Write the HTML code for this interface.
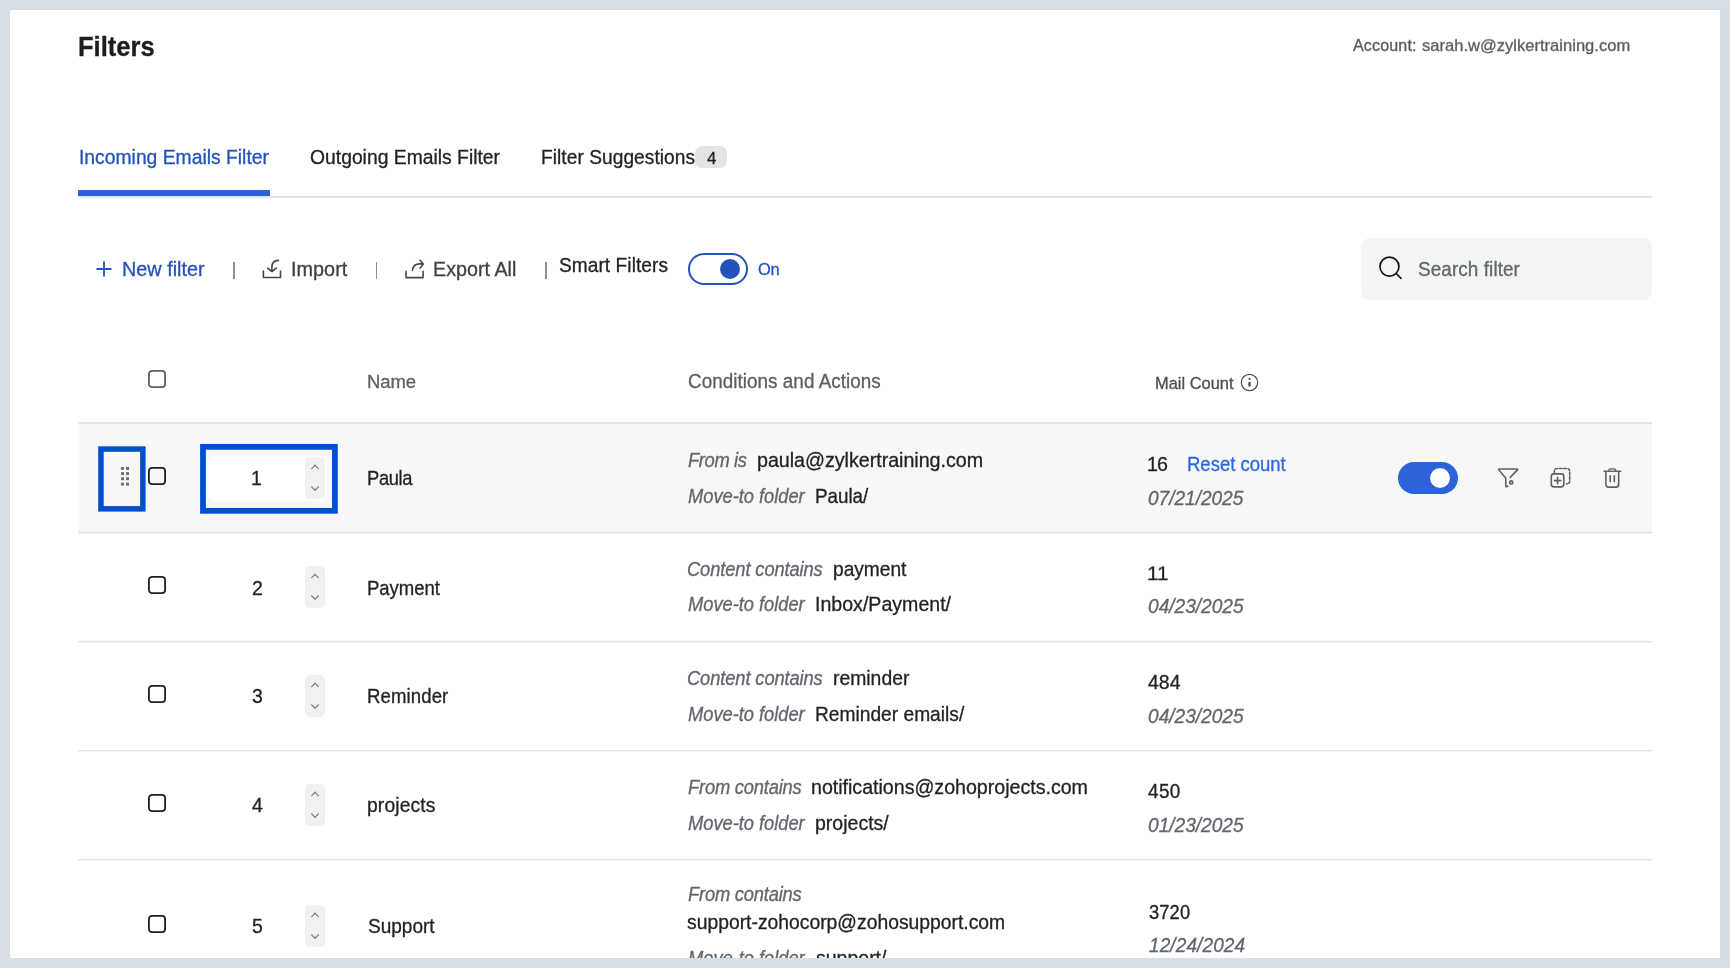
<!DOCTYPE html>
<html><head><meta charset="utf-8">
<style>
html,body{margin:0;padding:0;}
body{width:1730px;height:968px;overflow:hidden;background:#d8dee5;position:relative;font-family:"Liberation Sans", sans-serif;}
.t{position:absolute;white-space:nowrap;line-height:normal;will-change:transform;-webkit-text-stroke:0.3px currentColor;}
.mk{display:inline-block;width:0;height:0;}
svg{position:absolute;overflow:visible;}
</style></head><body>
<div style="position:absolute;left:10px;top:10px;width:1710px;height:948px;background:#fff;box-shadow:0 0 0 1px #d3dce2;"></div>
<div style="position:absolute;left:695px;top:146px;width:32px;height:22px;background:#e3e4e6;border-radius:7px;"></div>
<div style="position:absolute;left:78px;top:196px;width:1574px;height:2px;background:#e3e4e6;"></div>
<div style="position:absolute;left:78px;top:190px;width:192px;height:6px;background:#2c63d9;"></div>
<svg style="left:96px;top:261px" width="16" height="16" viewBox="0 0 16 16"><path d="M8 0.5V15.5M0.5 8H15.5" stroke="#2552b8" stroke-width="1.8" fill="none"/></svg>
<div style="position:absolute;left:233px;top:262px;width:1.6px;height:17px;background:#8e8e8e;"></div>
<div style="position:absolute;left:375.5px;top:262px;width:1.6px;height:17px;background:#8e8e8e;"></div>
<div style="position:absolute;left:545px;top:262px;width:1.6px;height:17px;background:#8e8e8e;"></div>
<svg style="left:258px;top:254px" width="30" height="30" viewBox="0 0 30 30"><path d="M5.4 17V23.5H22.5V17M20.5 6.4C16.5 6.6 13.9 9 13.9 13V17.2M9.6 14.2L13.9 17.5L18.3 14.2" stroke="#43474e" stroke-width="1.6" fill="none" stroke-linecap="round" stroke-linejoin="round"/></svg>
<svg style="left:400px;top:254px" width="30" height="30" viewBox="0 0 30 30"><path d="M6 17.2V23.6H23.1V17.2M12.4 16.4C12.8 12 16 9.9 20 9.9H23M20.1 6.2L23.3 9.9L20.1 14.2" stroke="#43474e" stroke-width="1.6" fill="none" stroke-linecap="round" stroke-linejoin="round"/></svg>
<div style="position:absolute;left:688px;top:253px;width:60px;height:32px;box-sizing:border-box;border:2px solid #2552b8;border-radius:16px;"></div>
<div style="position:absolute;left:719.5px;top:259px;width:20px;height:20px;background:#2552b8;border-radius:50%;"></div>
<div style="position:absolute;left:1361px;top:238px;width:291px;height:62px;background:#f3f4f4;border-radius:9px;"></div>
<svg style="left:1374px;top:252px" width="34" height="34" viewBox="0 0 34 34"><circle cx="15.45" cy="14.6" r="9.5" stroke="#141518" stroke-width="1.7" fill="none"/><path d="M22.3 21.5L27 26.3" stroke="#141518" stroke-width="1.7" stroke-linecap="round"/></svg>
<svg style="left:148px;top:370px" width="18" height="18" viewBox="0 0 18 18"><rect x="0.9" y="0.9" width="16.2" height="16.2" rx="3.2" stroke="#5b5f66" stroke-width="1.8" fill="none"/></svg>
<svg style="left:1240px;top:373px" width="19" height="19" viewBox="0 0 19 19"><circle cx="9.5" cy="9.5" r="8.2" stroke="#4a4e55" stroke-width="1.2" fill="none"/><circle cx="9.5" cy="5.9" r="1.05" fill="#4a4e55"/><path d="M9.5 10V12.5" stroke="#4a4e55" stroke-width="2.4" stroke-linecap="round"/></svg>
<div style="position:absolute;left:78px;top:422px;width:1574px;height:2px;background:#e3e4e6;"></div>
<div style="position:absolute;left:78px;top:424px;width:1574px;height:108px;background:#f7f7f7;"></div>
<svg style="left:0;top:0" width="1730" height="968"><rect x="78" y="531.9" width="1574" height="1.5" fill="#e2e3e5"/><rect x="78" y="640.9" width="1574" height="1.5" fill="#e2e3e5"/><rect x="78" y="749.9" width="1574" height="1.5" fill="#e2e3e5"/><rect x="78" y="858.9" width="1574" height="1.5" fill="#e2e3e5"/></svg>
<svg style="left:148px;top:576px" width="18" height="18" viewBox="0 0 18 18"><rect x="0.9" y="0.9" width="16.2" height="16.2" rx="3.2" stroke="#1d1f23" stroke-width="1.8" fill="none"/></svg>
<div style="position:absolute;left:305px;top:566px;width:20px;height:42px;background:#f0f1f2;border-radius:5px;"></div>
<svg style="left:305px;top:566px" width="20" height="42" viewBox="0 0 20 42"><path d="M6.3 12.1L10 8.3L13.7 12.1M6.3 29.5L10 33.3L13.7 29.5" stroke="#82868d" stroke-width="1.3" fill="none"/></svg>
<svg style="left:148px;top:685px" width="18" height="18" viewBox="0 0 18 18"><rect x="0.9" y="0.9" width="16.2" height="16.2" rx="3.2" stroke="#1d1f23" stroke-width="1.8" fill="none"/></svg>
<div style="position:absolute;left:305px;top:675px;width:20px;height:42px;background:#f0f1f2;border-radius:5px;"></div>
<svg style="left:305px;top:675px" width="20" height="42" viewBox="0 0 20 42"><path d="M6.3 12.1L10 8.3L13.7 12.1M6.3 29.5L10 33.3L13.7 29.5" stroke="#82868d" stroke-width="1.3" fill="none"/></svg>
<svg style="left:148px;top:794px" width="18" height="18" viewBox="0 0 18 18"><rect x="0.9" y="0.9" width="16.2" height="16.2" rx="3.2" stroke="#1d1f23" stroke-width="1.8" fill="none"/></svg>
<div style="position:absolute;left:305px;top:784px;width:20px;height:42px;background:#f0f1f2;border-radius:5px;"></div>
<svg style="left:305px;top:784px" width="20" height="42" viewBox="0 0 20 42"><path d="M6.3 12.1L10 8.3L13.7 12.1M6.3 29.5L10 33.3L13.7 29.5" stroke="#82868d" stroke-width="1.3" fill="none"/></svg>
<svg style="left:148px;top:915px" width="18" height="18" viewBox="0 0 18 18"><rect x="0.9" y="0.9" width="16.2" height="16.2" rx="3.2" stroke="#1d1f23" stroke-width="1.8" fill="none"/></svg>
<div style="position:absolute;left:305px;top:905px;width:20px;height:42px;background:#f0f1f2;border-radius:5px;"></div>
<svg style="left:305px;top:905px" width="20" height="42" viewBox="0 0 20 42"><path d="M6.3 12.1L10 8.3L13.7 12.1M6.3 29.5L10 33.3L13.7 29.5" stroke="#82868d" stroke-width="1.3" fill="none"/></svg>
<svg style="left:148px;top:467px" width="18" height="18" viewBox="0 0 18 18"><rect x="0.9" y="0.9" width="16.2" height="16.2" rx="3.2" stroke="#1d1f23" stroke-width="1.8" fill="none"/></svg>
<svg style="left:0;top:0" width="1730" height="968"><rect x="100.95" y="449.05" width="41.9" height="59.8" stroke="#0050ce" stroke-width="5.5" fill="none"/><rect x="202.97" y="446.87" width="131.95" height="63.95" stroke="#0050ce" stroke-width="5.75" fill="none"/></svg>
<svg style="left:121px;top:467px" width="8" height="19" viewBox="0 0 8 19"><rect x="0" y="0" width="3" height="3" fill="#6f7378"/><rect x="0" y="5.1" width="3" height="3" fill="#6f7378"/><rect x="0" y="10.2" width="3" height="3" fill="#6f7378"/><rect x="0" y="15.6" width="3" height="3" fill="#6f7378"/><rect x="5" y="0" width="3" height="3" fill="#6f7378"/><rect x="5" y="5.1" width="3" height="3" fill="#6f7378"/><rect x="5" y="10.2" width="3" height="3" fill="#6f7378"/><rect x="5" y="15.6" width="3" height="3" fill="#6f7378"/></svg>
<div style="position:absolute;left:207px;top:454.5px;width:120px;height:46.5px;background:#fff;border-radius:9px;"></div>
<div style="position:absolute;left:305px;top:457px;width:20px;height:42px;background:#f0f1f2;border-radius:5px;"></div>
<svg style="left:305px;top:457px" width="20" height="42" viewBox="0 0 20 42"><path d="M6.3 12.1L10 8.3L13.7 12.1M6.3 29.5L10 33.3L13.7 29.5" stroke="#82868d" stroke-width="1.3" fill="none"/></svg>
<div style="position:absolute;left:1398px;top:462px;width:60px;height:32px;background:#2c63d9;border-radius:16px;"></div>
<div style="position:absolute;left:1430px;top:468px;width:20px;height:20px;background:#fff;border-radius:50%;"></div>
<svg style="left:1490px;top:460px" width="140" height="35" viewBox="0 0 140 35"><g stroke="#5d6168" stroke-width="1.6" fill="none" stroke-linecap="round" stroke-linejoin="round"><path d="M20.2 17.4L27.4 9.9Q28.2 9 27 9H9.4Q8.2 9 9 9.9L15.8 18.2V26.2Q15.8 27.3 16.8 26.6L17.6 26"/><circle cx="21.2" cy="22.4" r="1.55" stroke-width="1.8"/><rect x="61.3" y="13.9" width="12.5" height="13" rx="2.6"/><path d="M64.4 20.6H70.8M67.6 17.4V23.8"/><path d="M64.3 13.4V11.6Q64.3 8.5 67.4 8.5H76.6Q79.7 8.5 79.7 11.6V20.8Q79.7 23.9 76.6 23.9" stroke-dasharray="2.6 1.7"/><path d="M114.1 11.3H130.7M115.9 11.3V24.5Q115.9 27.1 118.5 27.1H126.1Q128.7 27.1 128.7 24.5V11.3M120.2 15.8V21.6M124.3 15.8V21.6"/><path d="M118.7 11V10.6Q118.7 8.8 120.5 8.8H124Q125.8 8.8 125.8 10.6V11" stroke-width="1.3"/></g></svg>
<div class="t" style="transform:scaleY(1.105);transform-origin:0 23.00px;left:78.00px;top:33.00px;font-size:25.53px;color:#1b1d21;font-weight:bold;font-style:normal;letter-spacing:0.003px">Filters</div>
<div class="t" style="left:1353.00px;top:36.00px;font-size:16.07px;color:#555a62;font-weight:normal;font-style:normal;letter-spacing:0.137px">Account:</div>
<div class="t" style="transform:scaleY(0.979);transform-origin:0 15.20px;left:1421.80px;top:36.00px;font-size:16.55px;color:#555a62;font-weight:normal;font-style:normal;letter-spacing:0.012px">sarah.w@zylkertraining.com</div>
<div class="t" style="transform:scaleY(1.026);transform-origin:0 17.00px;left:78.50px;top:147.00px;font-size:19.32px;color:#2552b8;font-weight:normal;font-style:normal;letter-spacing:-0.001px">Incoming Emails Filter</div>
<div class="t" style="transform:scaleY(1.026);transform-origin:0 17.00px;left:310.40px;top:147.00px;font-size:19.32px;color:#1f2125;font-weight:normal;font-style:normal;letter-spacing:0.003px">Outgoing Emails Filter</div>
<div class="t" style="transform:scaleY(1.035);transform-origin:0 17.00px;left:541.30px;top:147.00px;font-size:19.15px;color:#1f2125;font-weight:normal;font-style:normal;letter-spacing:0.051px">Filter Suggestions</div>
<div class="t" style="transform:scaleY(1.027);transform-origin:0 14.80px;left:706.80px;top:148.50px;font-size:16.87px;color:#1f2125;font-weight:normal;font-style:normal;letter-spacing:0px">4</div>
<div class="t" style="left:122.00px;top:258.00px;font-size:19.8px;color:#2552b8;font-weight:normal;font-style:normal;letter-spacing:0.017px">New filter</div>
<div class="t" style="left:290.80px;top:258.00px;font-size:19.84px;color:#3d4148;font-weight:normal;font-style:normal;letter-spacing:0.023px">Import</div>
<div class="t" style="left:433.00px;top:258.00px;font-size:19.71px;color:#3d4148;font-weight:normal;font-style:normal;letter-spacing:0.014px">Export All</div>
<div class="t" style="transform:scaleY(1.039);transform-origin:0 17.00px;left:558.60px;top:255.00px;font-size:19.09px;color:#1f2125;font-weight:normal;font-style:normal;letter-spacing:0.069px">Smart Filters</div>
<div class="t" style="transform:scaleY(1.036);transform-origin:0 15.00px;left:758.00px;top:259.50px;font-size:16.45px;color:#2552b8;font-weight:normal;font-style:normal;letter-spacing:-0.286px">On</div>
<div class="t" style="transform:scaleY(1.031);transform-origin:0 17.00px;left:1418.40px;top:259.00px;font-size:18.94px;color:#62666d;font-weight:normal;font-style:normal;letter-spacing:0.072px">Search filter</div>
<div class="t" style="transform:scaleY(1.038);transform-origin:0 17.20px;left:367.00px;top:370.50px;font-size:18.43px;color:#5b5f66;font-weight:normal;font-style:normal;letter-spacing:-0.065px">Name</div>
<div class="t" style="transform:scaleY(1.050);transform-origin:0 17.00px;left:688.00px;top:371.00px;font-size:18.88px;color:#5b5f66;font-weight:normal;font-style:normal;letter-spacing:0.044px">Conditions and Actions</div>
<div class="t" style="transform:scaleY(1.019);transform-origin:0 15.00px;left:1155.00px;top:374.00px;font-size:16.44px;color:#4a4e55;font-weight:normal;font-style:normal;letter-spacing:-0.0px">Mail Count</div>
<div class="t" style="transform:scaleY(1.017);transform-origin:0 18.00px;left:251.40px;top:467.00px;font-size:19.5px;color:#1f2125;font-weight:normal;font-style:normal;letter-spacing:0px">1</div>
<div class="t" style="transform:scaleY(1.082);transform-origin:0 17.00px;left:366.70px;top:468.00px;font-size:18.33px;color:#1f2125;font-weight:normal;font-style:normal;letter-spacing:-0.346px">Paula</div>
<div class="t" style="transform:scaleY(1.082);transform-origin:0 17.00px;left:687.80px;top:450.00px;font-size:18.33px;color:#62666d;font-weight:normal;font-style:italic;letter-spacing:-0.354px">From is</div>
<div class="t" style="left:756.70px;top:449.00px;font-size:19.7px;color:#1f2125;font-weight:normal;font-style:normal;letter-spacing:-0.03px">paula@zylkertraining.com</div>
<div class="t" style="transform:scaleY(1.082);transform-origin:0 17.00px;left:687.80px;top:485.50px;font-size:18.33px;color:#62666d;font-weight:normal;font-style:italic;letter-spacing:-0.034px">Move-to folder</div>
<div class="t" style="transform:scaleY(1.053);transform-origin:0 17.00px;left:815.00px;top:485.50px;font-size:18.83px;color:#1f2125;font-weight:normal;font-style:normal;letter-spacing:-0.031px">Paula/</div>
<div class="t" style="left:1147.00px;top:452.50px;font-size:19.65px;color:#1f2125;font-weight:normal;font-style:normal;letter-spacing:-0.923px">16</div>
<div class="t" style="transform:scaleY(1.039);transform-origin:0 17.10px;left:1148.00px;top:487.50px;font-size:19.09px;color:#62666d;font-weight:normal;font-style:italic;letter-spacing:-0.019px">07/21/2025</div>
<div class="t" style="transform:scaleY(1.017);transform-origin:0 18.00px;left:252.40px;top:576.50px;font-size:19.5px;color:#1f2125;font-weight:normal;font-style:normal;letter-spacing:0px">2</div>
<div class="t" style="transform:scaleY(1.069);transform-origin:0 17.00px;left:366.70px;top:577.50px;font-size:18.55px;color:#1f2125;font-weight:normal;font-style:normal;letter-spacing:-0.03px">Payment</div>
<div class="t" style="transform:scaleY(1.082);transform-origin:0 16.80px;left:686.80px;top:558.50px;font-size:18.33px;color:#62666d;font-weight:normal;font-style:italic;letter-spacing:-0.119px">Content contains</div>
<div class="t" style="transform:scaleY(1.034);transform-origin:0 16.80px;left:832.50px;top:558.50px;font-size:19.17px;color:#1f2125;font-weight:normal;font-style:normal;letter-spacing:-0.008px">payment</div>
<div class="t" style="transform:scaleY(1.082);transform-origin:0 17.00px;left:687.80px;top:594.00px;font-size:18.33px;color:#62666d;font-weight:normal;font-style:italic;letter-spacing:-0.034px">Move-to folder</div>
<div class="t" style="transform:scaleY(1.013);transform-origin:0 18.00px;left:815.00px;top:593.00px;font-size:19.58px;color:#1f2125;font-weight:normal;font-style:normal;letter-spacing:0.0px">Inbox/Payment/</div>
<div class="t" style="transform:scaleY(0.959);transform-origin:0 19.00px;left:1147.00px;top:561.00px;font-size:20.67px;color:#1f2125;font-weight:normal;font-style:normal;letter-spacing:0.046px">11</div>
<div class="t" style="transform:scaleY(1.035);transform-origin:0 17.00px;left:1148.00px;top:596.00px;font-size:19.15px;color:#62666d;font-weight:normal;font-style:italic;letter-spacing:-0.017px">04/23/2025</div>
<div class="t" style="transform:scaleY(1.017);transform-origin:0 18.00px;left:252.40px;top:685.00px;font-size:19.5px;color:#1f2125;font-weight:normal;font-style:normal;letter-spacing:0px">3</div>
<div class="t" style="transform:scaleY(1.067);transform-origin:0 17.00px;left:366.70px;top:686.00px;font-size:18.59px;color:#1f2125;font-weight:normal;font-style:normal;letter-spacing:0.107px">Reminder</div>
<div class="t" style="transform:scaleY(1.082);transform-origin:0 17.10px;left:686.80px;top:667.50px;font-size:18.33px;color:#62666d;font-weight:normal;font-style:italic;letter-spacing:-0.119px">Content contains</div>
<div class="t" style="transform:scaleY(1.024);transform-origin:0 18.10px;left:832.50px;top:666.50px;font-size:19.36px;color:#1f2125;font-weight:normal;font-style:normal;letter-spacing:-0.006px">reminder</div>
<div class="t" style="transform:scaleY(1.082);transform-origin:0 17.20px;left:687.80px;top:703.50px;font-size:18.33px;color:#62666d;font-weight:normal;font-style:italic;letter-spacing:-0.034px">Move-to folder</div>
<div class="t" style="transform:scaleY(1.033);transform-origin:0 17.20px;left:815.00px;top:703.50px;font-size:19.19px;color:#1f2125;font-weight:normal;font-style:normal;letter-spacing:-0.004px">Reminder emails/</div>
<div class="t" style="transform:scaleY(1.017);transform-origin:0 18.00px;left:1148.00px;top:671.00px;font-size:19.5px;color:#1f2125;font-weight:normal;font-style:normal;letter-spacing:0px">484</div>
<div class="t" style="transform:scaleY(1.035);transform-origin:0 17.00px;left:1148.00px;top:706.00px;font-size:19.15px;color:#62666d;font-weight:normal;font-style:italic;letter-spacing:-0.017px">04/23/2025</div>
<div class="t" style="transform:scaleY(1.017);transform-origin:0 18.20px;left:252.40px;top:793.50px;font-size:19.5px;color:#1f2125;font-weight:normal;font-style:normal;letter-spacing:0px">4</div>
<div class="t" style="transform:scaleY(1.028);transform-origin:0 17.20px;left:366.70px;top:794.50px;font-size:19.29px;color:#1f2125;font-weight:normal;font-style:normal;letter-spacing:0.133px">projects</div>
<div class="t" style="transform:scaleY(1.082);transform-origin:0 17.00px;left:687.80px;top:776.50px;font-size:18.33px;color:#62666d;font-weight:normal;font-style:italic;letter-spacing:-0.196px">From contains</div>
<div class="t" style="left:811.30px;top:775.50px;font-size:19.66px;color:#1f2125;font-weight:normal;font-style:normal;letter-spacing:-0.028px">notifications@zohoprojects.com</div>
<div class="t" style="transform:scaleY(1.082);transform-origin:0 17.00px;left:687.80px;top:813.00px;font-size:18.33px;color:#62666d;font-weight:normal;font-style:italic;letter-spacing:-0.034px">Move-to folder</div>
<div class="t" style="transform:scaleY(1.016);transform-origin:0 18.00px;left:814.50px;top:812.00px;font-size:19.51px;color:#1f2125;font-weight:normal;font-style:normal;letter-spacing:0.003px">projects/</div>
<div class="t" style="transform:scaleY(1.045);transform-origin:0 17.20px;left:1148.00px;top:780.50px;font-size:18.97px;color:#1f2125;font-weight:normal;font-style:normal;letter-spacing:0.359px">450</div>
<div class="t" style="transform:scaleY(1.035);transform-origin:0 17.00px;left:1148.00px;top:815.00px;font-size:19.15px;color:#62666d;font-weight:normal;font-style:italic;letter-spacing:-0.017px">01/23/2025</div>
<div class="t" style="transform:scaleY(1.069);transform-origin:0 17.10px;left:1186.70px;top:453.50px;font-size:18.55px;color:#2f68de;font-weight:normal;font-style:normal;letter-spacing:-0.014px">Reset count</div>
<div class="t" style="transform:scaleY(1.017);transform-origin:0 18.00px;left:252.40px;top:915.00px;font-size:19.5px;color:#1f2125;font-weight:normal;font-style:normal;letter-spacing:0px">5</div>
<div class="t" style="transform:scaleY(1.041);transform-origin:0 17.00px;left:367.70px;top:916.00px;font-size:19.05px;color:#1f2125;font-weight:normal;font-style:normal;letter-spacing:-0.011px">Support</div>
<div class="t" style="transform:scaleY(1.082);transform-origin:0 17.00px;left:687.80px;top:884.00px;font-size:18.33px;color:#62666d;font-weight:normal;font-style:italic;letter-spacing:-0.196px">From contains</div>
<div class="t" style="transform:scaleY(1.026);transform-origin:0 17.20px;left:687.40px;top:911.50px;font-size:19.33px;color:#1f2125;font-weight:normal;font-style:normal;letter-spacing:-0.003px">support-zohocorp@zohosupport.com</div>
<div class="t" style="transform:scaleY(1.082);transform-origin:0 17.00px;left:687.80px;top:947.50px;font-size:18.33px;color:#62666d;font-weight:normal;font-style:italic;letter-spacing:-0.034px">Move-to folder</div>
<div class="t" style="transform:scaleY(1.017);transform-origin:0 18.00px;left:816.00px;top:946.50px;font-size:19.5px;color:#1f2125;font-weight:normal;font-style:normal;letter-spacing:0px">support/</div>
<div class="t" style="transform:scaleY(1.082);transform-origin:0 17.20px;left:1148.70px;top:901.50px;font-size:18.33px;color:#1f2125;font-weight:normal;font-style:normal;letter-spacing:0.107px">3720</div>
<div class="t" style="transform:scaleY(1.041);transform-origin:0 17.20px;left:1148.70px;top:935.00px;font-size:19.05px;color:#62666d;font-weight:normal;font-style:italic;letter-spacing:0.093px">12/24/2024</div>
<div style="position:absolute;left:0;top:958px;width:1730px;height:10px;background:#d8dee5"></div>
</body></html>
